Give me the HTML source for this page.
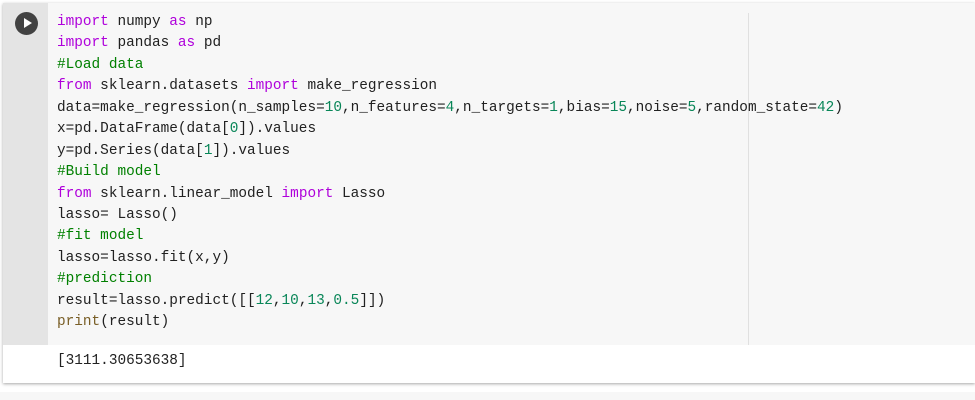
<!DOCTYPE html>
<html><head><style>
body{margin:0;background:#fff;width:975px;height:400px;overflow:hidden;position:relative;font-family:"Liberation Mono",monospace}
.cell{position:absolute;left:3px;top:3px;width:972px;height:380px;box-shadow:0 1px 3px rgba(0,0,0,.35);background:#fff}
.gut{position:absolute;left:0;top:0;width:45px;height:342px;background:#e4e4e4}
.code{position:absolute;left:45px;top:0;right:0;height:342px;background:#f7f7f7}
.rule{position:absolute;left:745px;top:10px;width:1px;height:332px;background:#e0e0e0}
pre{margin:0;position:absolute;left:57px;top:12px;font-family:"Liberation Mono",monospace;font-size:14.4px;line-height:21.43px;color:#212121}
.k{color:#af00db}.c{color:#008000}.n{color:#098658}.f{color:#795e26}
.out{position:absolute;left:57px;top:353px;font-size:14.4px;color:#212121}
.btn{position:absolute;left:12px;top:9px;width:23px;height:23px;border-radius:50%;background:#424242}
.btn:after{content:"";position:absolute;left:9px;top:6px;border-left:8px solid #fff;border-top:5.5px solid transparent;border-bottom:5.5px solid transparent}
.bot{position:absolute;left:0;top:392px;width:975px;height:8px;background:#f7f7f7}
</style></head><body>
<div class="cell"><div class="gut"></div><div class="code"></div><div class="rule"></div><div class="btn"></div></div>
<pre><span class="k">import</span> numpy <span class="k">as</span> np
<span class="k">import</span> pandas <span class="k">as</span> pd
<span class="c">#Load data</span>
<span class="k">from</span> sklearn.datasets <span class="k">import</span> make_regression
data=make_regression(n_samples=<span class="n">10</span>,n_features=<span class="n">4</span>,n_targets=<span class="n">1</span>,bias=<span class="n">15</span>,noise=<span class="n">5</span>,random_state=<span class="n">42</span>)
x=pd.DataFrame(data[<span class="n">0</span>]).values
y=pd.Series(data[<span class="n">1</span>]).values
<span class="c">#Build model</span>
<span class="k">from</span> sklearn.linear_model <span class="k">import</span> Lasso
lasso= Lasso()
<span class="c">#fit model</span>
lasso=lasso.fit(x,y)
<span class="c">#prediction</span>
result=lasso.predict([[<span class="n">12</span>,<span class="n">10</span>,<span class="n">13</span>,<span class="n">0.5</span>]])
<span class="f">print</span>(result)</pre>
<div class="out">[3111.30653638]</div>
<div class="bot"></div>
</body></html>
